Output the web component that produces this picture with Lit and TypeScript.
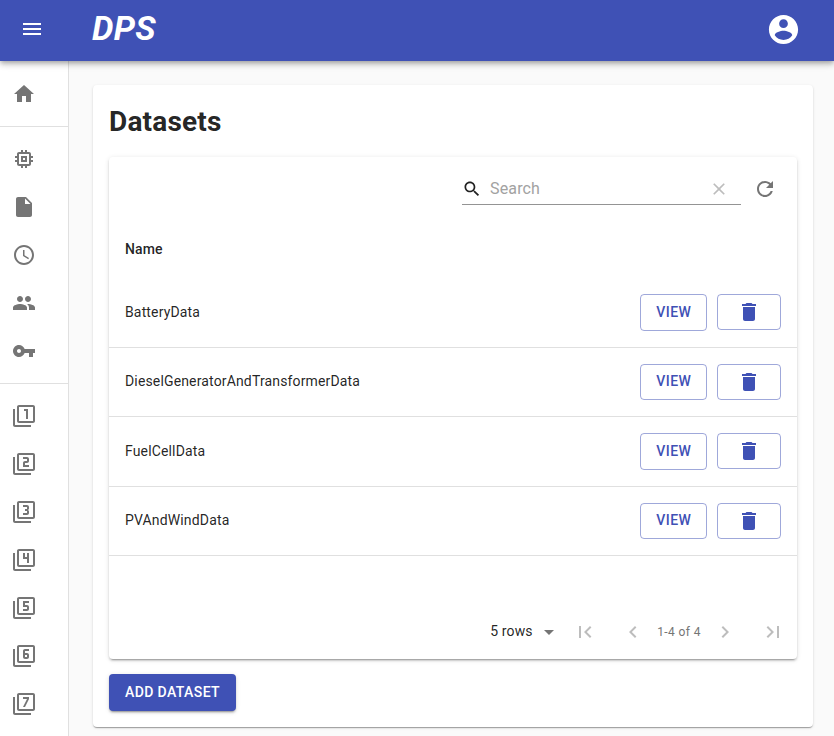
import { LitElement, html, css } from "lit";
import { customElement, property } from "lit/decorators.js";

const FRAME =
  "M3 5H1v16c0 1.1.9 2 2 2h16v-2H3V5zM21 1H7c-1.1 0-2 .9-2 2v14c0 1.1.9 2 2 2h14c1.1 0 2-.9 2-2V3c0-1.1-.9-2-2-2zm0 16H7V3h14v14z";

const ICONS: Record<string, string> = {
  menu: "M3 18h18v-2H3v2zm0-5h18v-2H3v2zm0-7v2h18V6H3z",
  account:
    "M12 2C6.48 2 2 6.48 2 12s4.48 10 10 10 10-4.48 10-10S17.52 2 12 2zm0 3c1.66 0 3 1.34 3 3s-1.34 3-3 3-3-1.34-3-3 1.34-3 3-3zm0 14.2c-2.5 0-4.71-1.28-6-3.22.03-1.99 4-3.08 6-3.08 1.99 0 5.97 1.09 6 3.08-1.29 1.94-3.5 3.22-6 3.22z",
  home: "M10 20v-6h4v6h5v-8h3L12 3 2 12h3v8z",
  memory:
    "M15 9H9v6h6V9zm-2 4h-2v-2h2v2zm8-2V9h-2V7c0-1.1-.9-2-2-2h-2V3h-2v2h-2V3H9v2H7c-1.1 0-2 .9-2 2v2H3v2h2v2H3v2h2v2c0 1.1.9 2 2 2h2v2h2v-2h2v2h2v-2h2c1.1 0 2-.9 2-2v-2h2v-2h-2v-2h2zm-4 6H7V7h10v10z",
  file: "M6 2c-1.1 0-1.99.9-1.99 2L4 20c0 1.1.89 2 1.99 2H18c1.1 0 2-.9 2-2V8l-6-6H6zm7 7V3.5L18.5 9H13z",
  clock:
    "M11.99 2C6.47 2 2 6.48 2 12s4.47 10 9.99 10C17.52 22 22 17.52 22 12S17.52 2 11.99 2zM12 20c-4.42 0-8-3.58-8-8s3.58-8 8-8 8 3.58 8 8-3.58 8-8 8zM12.5 7H11v6l5.25 3.15.75-1.23-4.5-2.67z",
  people:
    "M16 11c1.66 0 2.99-1.34 2.99-3S17.66 5 16 5c-1.66 0-3 1.34-3 3s1.34 3 3 3zm-8 0c1.66 0 2.99-1.34 2.99-3S9.66 5 8 5C6.34 5 5 6.34 5 8s1.34 3 3 3zm0 2c-2.33 0-7 1.17-7 3.5V19h14v-2.5c0-2.33-4.67-3.5-7-3.5zm8 0c-.29 0-.62.02-.97.05 1.16.84 1.97 1.97 1.97 3.45V19h6v-2.5c0-2.33-4.67-3.5-7-3.5z",
  key: "M12.65 10C11.83 7.67 9.61 6 7 6c-3.31 0-6 2.69-6 6s2.69 6 6 6c2.61 0 4.83-1.67 5.65-4H17v4h4v-4h2v-4H12.65zM7 14c-1.1 0-2-.9-2-2s.9-2 2-2 2 .9 2 2-.9 2-2 2z",
  one: FRAME + "M14 15h2V5h-4v2h2v8z",
  two: FRAME + "M17 13h-4v-2h2c1.1 0 2-.89 2-2V7c0-1.11-.9-2-2-2h-4v2h4v2h-2c-1.1 0-2 .89-2 2v4h6v-2z",
  three:
    FRAME +
    "M17 13v-1.5c0-.83-.67-1.5-1.5-1.5.83 0 1.5-.67 1.5-1.5V7c0-1.11-.9-2-2-2h-4v2h4v2h-2v2h2v2h-4v2h4c1.1 0 2-.89 2-2z",
  four: FRAME + "M15 15h2V5h-2v4h-2V5h-2v6h4v4z",
  five: FRAME + "M17 13v-2c0-1.11-.9-2-2-2h-2V7h4V5h-6v6h4v2h-4v2h4c1.1 0 2-.89 2-2z",
  six:
    FRAME +
    "M13 15h2c1.1 0 2-.89 2-2v-2c0-1.11-.9-2-2-2h-2V7h4V5h-4c-1.1 0-2 .89-2 2v6c0 1.11.9 2 2 2zm0-4h2v2h-2v-2z",
  seven: FRAME + "M13 15l4-8V5h-6v2h4l-4 8z",
  search:
    "M15.5 14h-.79l-.28-.27C15.41 12.59 16 11.11 16 9.5 16 5.91 13.09 3 9.5 3S3 5.91 3 9.5 5.91 16 9.5 16c1.61 0 3.09-.59 4.23-1.57l.27.28v.79l5 4.99L20.49 19l-4.99-5zm-6 0C7.01 14 5 11.99 5 9.5S7.01 5 9.5 5 14 7.01 14 9.5 11.99 14 9.5 14z",
  clear:
    "M19 6.41L17.59 5 12 10.59 6.41 5 5 6.41 10.59 12 5 17.59 6.41 19 12 13.41 17.59 19 19 17.59 13.41 12z",
  refresh:
    "M17.65 6.35C16.2 4.9 14.21 4 12 4c-4.42 0-7.99 3.58-7.99 8s3.57 8 7.99 8c3.73 0 6.84-2.55 7.73-6h-2.08c-.82 2.33-3.04 4-5.65 4-3.31 0-6-2.69-6-6s2.69-6 6-6c1.66 0 3.14.69 4.22 1.78L13 11h7V4l-2.35 2.35z",
  trash: "M6 19c0 1.1.9 2 2 2h8c1.1 0 2-.9 2-2V7H6v12zM19 4h-3.5l-1-1h-5l-1 1H5v2h14V4z",
  drop: "M7 10l5 5 5-5z",
  first: "M18.41 16.59L13.82 12l4.59-4.59L17 6l-6 6 6 6zM6 6h2v12H6z",
  prev: "M15.41 7.41L14 6l-6 6 6 6 1.41-1.41L10.83 12z",
  next: "M10 6L8.59 7.41 13.17 12l-4.58 4.59L10 18l6-6z",
  last: "M5.59 7.41L10.18 12l-4.59 4.59L7 18l6-6-6-6zM16 6h2v12h-2z",
};

@customElement("md-icon")
class MdIcon extends LitElement {
  @property() name = "";

  static styles = css`
    :host {
      display: block;
      flex: none;
      width: 24px;
      height: 24px;
    }
    .glyph {
      display: block;
      width: 100%;
      height: 100%;
      fill: currentColor;
    }
  `;

  render() {
    return html`<svg class="glyph" viewBox="0 0 24 24"><path d=${ICONS[this.name] ?? ""}></path></svg>`;
  }
}

@customElement("app-root")
class AppRoot extends LitElement {
  private groups = [
    ["home"],
    ["memory", "file", "clock", "people", "key"],
    ["one", "two", "three", "four", "five", "six", "seven"],
  ];

  private datasets = ["BatteryData", "DieselGeneratorAndTransformerData", "FuelCellData", "PVAndWindData"];

  static styles = css`
    :host {
      display: flex;
      flex-direction: column;
      height: 736px;
      overflow: hidden;
      background: #fafafa;
      color: rgba(0, 0, 0, 0.87);
      font-family: Roboto, "Liberation Sans", sans-serif;
      font-size: 14px;
      line-height: 20px;
    }
    * {
      box-sizing: border-box;
    }
    button {
      font: inherit;
      color: inherit;
      background: none;
      border: 0;
      margin: 0;
      padding: 0;
    }
    .bar {
      flex: none;
      position: relative;
      z-index: 1;
      display: flex;
      align-items: center;
      height: 61px;
      padding: 0 33px 3px 20px;
      background: #3f51b5;
      color: #fff;
      box-shadow: 0 2px 4px -1px rgba(0, 0, 0, 0.2), 0 4px 5px 0 rgba(0, 0, 0, 0.14),
        0 1px 10px 0 rgba(0, 0, 0, 0.12);
    }
    .brand {
      flex: 1;
      margin: 0 0 2px 48px;
      font-size: 34px;
      line-height: 40px;
      font-weight: 700;
      font-style: italic;
      letter-spacing: 0.25px;
    }
    .avatar {
      width: 35px;
      height: 35px;
      margin-top: 1px;
    }
    .body {
      flex: 1;
      min-height: 0;
      display: flex;
    }
    .side {
      flex: none;
      width: 69px;
      padding-top: 1px;
      overflow: hidden;
      background: #fff;
      border-right: 1px solid #e0e0e0;
      color: #757575;
    }
    .group {
      padding: 8px 0;
    }
    .group + .group {
      border-top: 1px solid #e0e0e0;
    }
    .item {
      display: flex;
      align-items: center;
      height: 48px;
      padding-left: 12px;
    }
    .main {
      flex: 1;
      padding: 24px 21px 0 24px;
    }
    .card,
    .table {
      background: #fff;
      border-radius: 4px;
    }
    .card {
      height: 642px;
      padding: 16px;
      box-shadow: 0 2px 1px -1px rgba(0, 0, 0, 0.2), 0 1px 1px 0 rgba(0, 0, 0, 0.14),
        0 1px 3px 0 rgba(0, 0, 0, 0.12);
    }
    .title {
      margin: 0;
      height: 56px;
      font-size: 28px;
      line-height: 42px;
      font-weight: 700;
      letter-spacing: 0.2px;
    }
    .table {
      display: flex;
      flex-direction: column;
      height: 502px;
      box-shadow: 0 3px 1px -2px rgba(0, 0, 0, 0.2), 0 2px 2px 0 rgba(0, 0, 0, 0.14),
        0 1px 5px 0 rgba(0, 0, 0, 0.12);
    }
    .tools {
      display: flex;
      justify-content: flex-end;
      align-items: center;
      height: 64px;
      padding-right: 20px;
      color: #757575;
    }
    .search {
      display: flex;
      align-items: center;
      width: 279px;
      height: 32px;
      margin-right: 12px;
      border-bottom: 1px solid #949494;
    }
    .small {
      width: 20px;
      height: 20px;
    }
    .lens {
      color: rgba(0, 0, 0, 0.87);
    }
    .hint {
      flex: 1;
      margin-left: 8px;
      font-size: 16px;
      letter-spacing: 0.15px;
      color: #a2a2a2;
    }
    .wipe {
      margin: 1px 12px 0 0;
      color: #bdbdbd;
    }
    .head {
      height: 57.3px;
      padding: 18px 16px;
      font-weight: 500;
      letter-spacing: 0.15px;
    }
    .row {
      display: flex;
      align-items: flex-start;
      height: 69.5px;
      padding: 16px 16px 0;
      border-bottom: 1px solid #e0e0e0;
    }
    .name {
      flex: 1;
      padding-top: 7.5px;
      letter-spacing: 0.15px;
    }
    .view,
    .remove {
      display: flex;
      align-items: center;
      justify-content: center;
      border: 1px solid rgba(63, 81, 181, 0.5);
      border-radius: 4px;
      color: #3f51b5;
    }
    .view {
      width: 67px;
      height: 36.5px;
      margin-right: 10px;
      padding: 0 0 1.5px 0.5px;
    }
    .remove {
      width: 64px;
      height: 36px;
    }
    .view,
    .add {
      font-weight: 500;
      letter-spacing: 0.4px;
    }
    .foot {
      display: flex;
      justify-content: flex-end;
      align-items: center;
      height: 54px;
      margin-top: auto;
    }
    .count {
      padding-bottom: 2px;
      letter-spacing: 0.1px;
    }
    .arrow {
      color: #757575;
      margin-left: 4.4px;
    }
    .page {
      display: flex;
      justify-content: center;
      width: 48px;
      color: #bdbdbd;
    }
    .range {
      width: 44px;
      text-align: center;
      font-size: 12px;
      letter-spacing: 0.4px;
      white-space: nowrap;
      color: #757575;
    }
    .add {
      width: 127px;
      height: 36.5px;
      margin-top: 15px;
      border-radius: 4px;
      background: #3f51b5;
      color: #fff;
      box-shadow: 0 3px 1px -2px rgba(0, 0, 0, 0.2), 0 2px 2px 0 rgba(0, 0, 0, 0.14),
        0 1px 5px 0 rgba(0, 0, 0, 0.12);
    }
  `;

  render() {
    return html`
      <header class="bar">
        <md-icon name="menu"></md-icon>
        <h1 class="brand">DPS</h1>
        <md-icon class="avatar" name="account"></md-icon>
      </header>
      <div class="body">
        <nav class="side">
          ${this.groups.map(
            (group) => html`<div class="group">
              ${group.map((name) => html`<div class="item"><md-icon name=${name}></md-icon></div>`)}
            </div>`,
          )}
        </nav>
        <main class="main">
          <section class="card">
            <h2 class="title">Datasets</h2>
            <div class="table">
              <div class="tools">
                <div class="search">
                  <md-icon class="small lens" name="search"></md-icon>
                  <span class="hint">Search</span>
                  <md-icon class="small wipe" name="clear"></md-icon>
                </div>
                <md-icon name="refresh"></md-icon>
              </div>
              <div class="head">Name</div>
              ${this.datasets.map(
                (name) => html`<div class="row">
                  <span class="name">${name}</span>
                  <button class="view">VIEW</button>
                  <button class="remove"><md-icon name="trash"></md-icon></button>
                </div>`,
              )}
              <div class="foot">
                <span class="count">5 rows</span>
                <md-icon class="arrow" name="drop"></md-icon>
                <span class="page"><md-icon name="first"></md-icon></span>
                <span class="page"><md-icon name="prev"></md-icon></span>
                <span class="range">1-4 of 4</span>
                <span class="page"><md-icon name="next"></md-icon></span>
                <span class="page"><md-icon name="last"></md-icon></span>
              </div>
            </div>
            <button class="add">ADD DATASET</button>
          </section>
        </main>
      </div>
    `;
  }
}
